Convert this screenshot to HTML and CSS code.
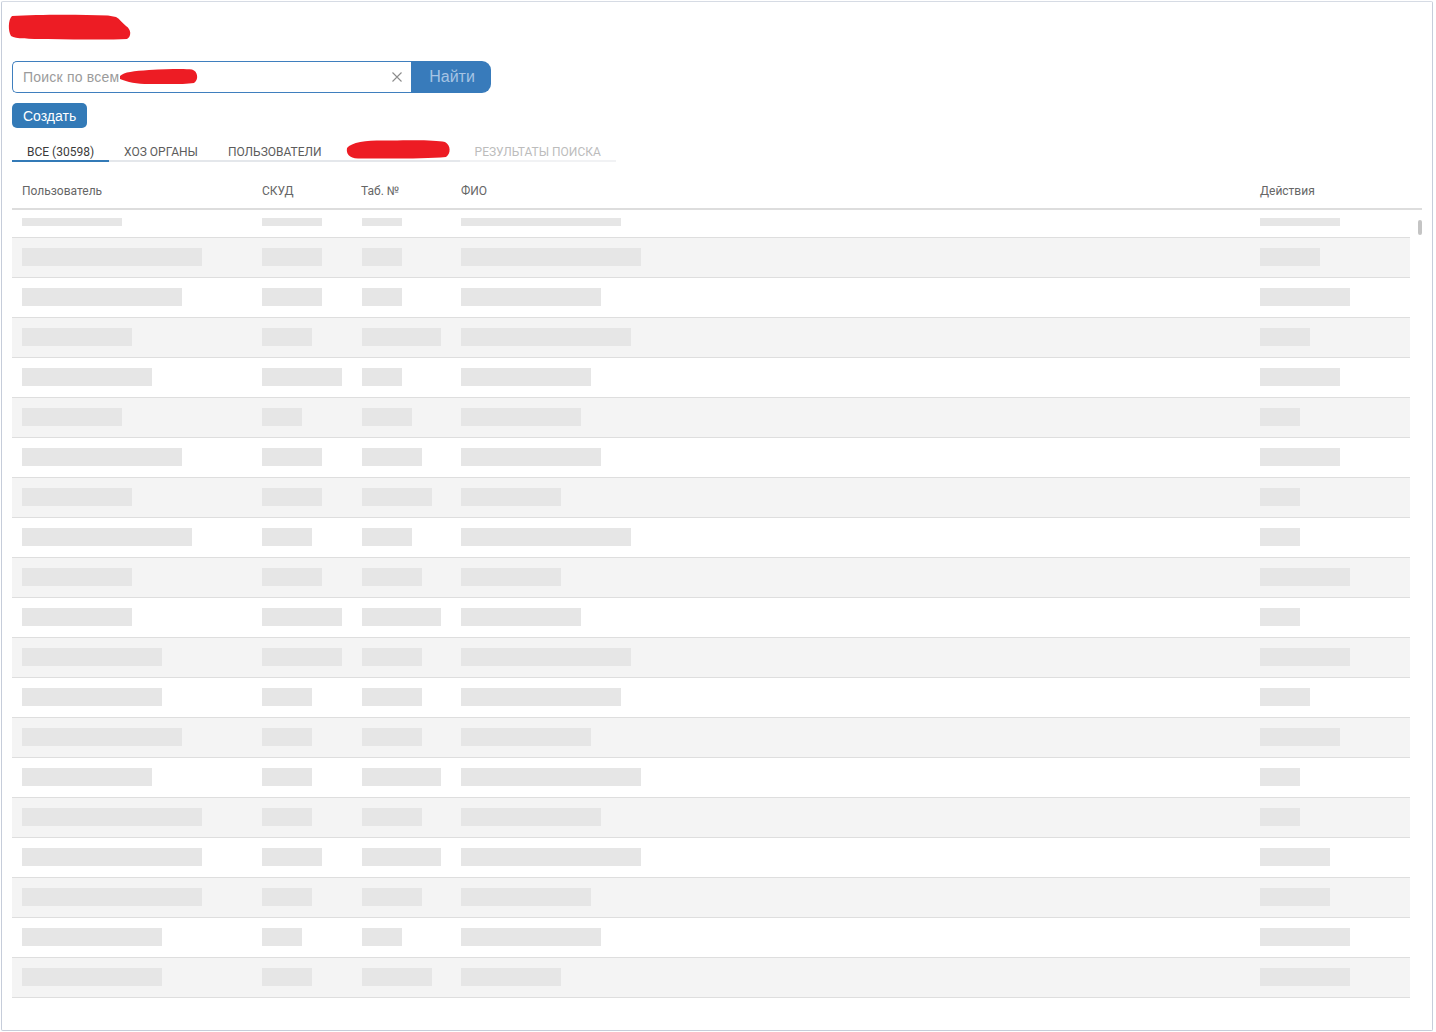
FILE: index.html
```html
<!DOCTYPE html>
<html lang="ru">
<head>
<meta charset="utf-8">
<title>Пользователи</title>
<link rel="stylesheet" href="styles.css">
</head>
<body>
<div class="frame">
  <div class="title">
    <svg class="redact-title" width="124" height="26" viewBox="0 0 124 26"><path d="M4 2 C30 0.5 70 0.5 100 1.5 L108 3 C112 5 114 9 118 12 C123 15 124 22 119 25 C100 26 70 25.5 40 25 C20 25 8 25 3 22 C0 17 0 6 4 2 Z" fill="#ed1c24"/></svg>
  </div>

  <div class="search-row">
    <div class="search-box">
      <span class="placeholder">Поиск по всем</span>
      <svg class="redact-input" width="80" height="17" viewBox="0 0 80 17"><path d="M1 8 C5 4 15 3 30 2 C50 1 65 0.5 73 1.5 C79 3 80 12 75 15 C65 16.5 45 16 30 16 C18 16 8 14 1 11 Z" fill="#ed1c24"/></svg>
      <span class="spacer"></span>
      <svg class="clear" width="10" height="10" viewBox="0 0 10 10"><path d="M0.5 0.5 L9.5 9.5 M9.5 0.5 L0.5 9.5" stroke="#8c8c8c" stroke-width="1.1" fill="none"/></svg>
    </div>
    <button class="find-btn" type="button">Найти</button>
  </div>

  <button class="create-btn" type="button">Создать</button>

  <div class="tabs">
    <div class="tab active">ВСЕ (30598)</div>
    <div class="tab">ХОЗ ОРГАНЫ</div>
    <div class="tab">ПОЛЬЗОВАТЕЛИ</div>
    <div class="tab"><span class="tab-redacted"><svg class="redact-tab" width="106" height="20" viewBox="0 0 106 20"><path d="M1 9 C6 2 25 1 45 1.5 C70 1 90 1 99 3 C105 6 105 15 100 18 C80 20 40 19.5 12 19.5 C3 19 0 15 1 9 Z" fill="#ed1c24"/></svg></span></div>
    <div class="tab disabled">РЕЗУЛЬТАТЫ ПОИСКА</div>
  </div>

  <div class="grid-head">
    <div class="th">Пользователь</div>
    <div class="th">СКУД</div>
    <div class="th">Таб. №</div>
    <div class="th">ФИО</div>
    <div class="th">Действия</div>
  </div>

  <div class="grid-body">
    <div class="rows">
      <div class="row partial">
        <div class="td"><span class="bar" style="width:100px"></span></div>
        <div class="td"><span class="bar" style="width:60px"></span></div>
        <div class="td"><span class="bar" style="width:40px"></span></div>
        <div class="td"><span class="bar" style="width:160px"></span></div>
        <div class="td"><span class="bar" style="width:80px"></span></div>
      </div>
      <div class="row odd">
        <div class="td"><span class="bar" style="width:180px"></span></div>
        <div class="td"><span class="bar" style="width:60px"></span></div>
        <div class="td"><span class="bar" style="width:40px"></span></div>
        <div class="td"><span class="bar" style="width:180px"></span></div>
        <div class="td"><span class="bar" style="width:60px"></span></div>
      </div>
      <div class="row">
        <div class="td"><span class="bar" style="width:160px"></span></div>
        <div class="td"><span class="bar" style="width:60px"></span></div>
        <div class="td"><span class="bar" style="width:40px"></span></div>
        <div class="td"><span class="bar" style="width:140px"></span></div>
        <div class="td"><span class="bar" style="width:90px"></span></div>
      </div>
      <div class="row odd">
        <div class="td"><span class="bar" style="width:110px"></span></div>
        <div class="td"><span class="bar" style="width:50px"></span></div>
        <div class="td"><span class="bar" style="width:79px"></span></div>
        <div class="td"><span class="bar" style="width:170px"></span></div>
        <div class="td"><span class="bar" style="width:50px"></span></div>
      </div>
      <div class="row">
        <div class="td"><span class="bar" style="width:130px"></span></div>
        <div class="td"><span class="bar" style="width:80px"></span></div>
        <div class="td"><span class="bar" style="width:40px"></span></div>
        <div class="td"><span class="bar" style="width:130px"></span></div>
        <div class="td"><span class="bar" style="width:80px"></span></div>
      </div>
      <div class="row odd">
        <div class="td"><span class="bar" style="width:100px"></span></div>
        <div class="td"><span class="bar" style="width:40px"></span></div>
        <div class="td"><span class="bar" style="width:50px"></span></div>
        <div class="td"><span class="bar" style="width:120px"></span></div>
        <div class="td"><span class="bar" style="width:40px"></span></div>
      </div>
      <div class="row">
        <div class="td"><span class="bar" style="width:160px"></span></div>
        <div class="td"><span class="bar" style="width:60px"></span></div>
        <div class="td"><span class="bar" style="width:60px"></span></div>
        <div class="td"><span class="bar" style="width:140px"></span></div>
        <div class="td"><span class="bar" style="width:80px"></span></div>
      </div>
      <div class="row odd">
        <div class="td"><span class="bar" style="width:110px"></span></div>
        <div class="td"><span class="bar" style="width:60px"></span></div>
        <div class="td"><span class="bar" style="width:70px"></span></div>
        <div class="td"><span class="bar" style="width:100px"></span></div>
        <div class="td"><span class="bar" style="width:40px"></span></div>
      </div>
      <div class="row">
        <div class="td"><span class="bar" style="width:170px"></span></div>
        <div class="td"><span class="bar" style="width:50px"></span></div>
        <div class="td"><span class="bar" style="width:50px"></span></div>
        <div class="td"><span class="bar" style="width:170px"></span></div>
        <div class="td"><span class="bar" style="width:40px"></span></div>
      </div>
      <div class="row odd">
        <div class="td"><span class="bar" style="width:110px"></span></div>
        <div class="td"><span class="bar" style="width:60px"></span></div>
        <div class="td"><span class="bar" style="width:60px"></span></div>
        <div class="td"><span class="bar" style="width:100px"></span></div>
        <div class="td"><span class="bar" style="width:90px"></span></div>
      </div>
      <div class="row">
        <div class="td"><span class="bar" style="width:110px"></span></div>
        <div class="td"><span class="bar" style="width:80px"></span></div>
        <div class="td"><span class="bar" style="width:79px"></span></div>
        <div class="td"><span class="bar" style="width:120px"></span></div>
        <div class="td"><span class="bar" style="width:40px"></span></div>
      </div>
      <div class="row odd">
        <div class="td"><span class="bar" style="width:140px"></span></div>
        <div class="td"><span class="bar" style="width:80px"></span></div>
        <div class="td"><span class="bar" style="width:60px"></span></div>
        <div class="td"><span class="bar" style="width:170px"></span></div>
        <div class="td"><span class="bar" style="width:90px"></span></div>
      </div>
      <div class="row">
        <div class="td"><span class="bar" style="width:140px"></span></div>
        <div class="td"><span class="bar" style="width:50px"></span></div>
        <div class="td"><span class="bar" style="width:60px"></span></div>
        <div class="td"><span class="bar" style="width:160px"></span></div>
        <div class="td"><span class="bar" style="width:50px"></span></div>
      </div>
      <div class="row odd">
        <div class="td"><span class="bar" style="width:160px"></span></div>
        <div class="td"><span class="bar" style="width:50px"></span></div>
        <div class="td"><span class="bar" style="width:60px"></span></div>
        <div class="td"><span class="bar" style="width:130px"></span></div>
        <div class="td"><span class="bar" style="width:80px"></span></div>
      </div>
      <div class="row">
        <div class="td"><span class="bar" style="width:130px"></span></div>
        <div class="td"><span class="bar" style="width:50px"></span></div>
        <div class="td"><span class="bar" style="width:79px"></span></div>
        <div class="td"><span class="bar" style="width:180px"></span></div>
        <div class="td"><span class="bar" style="width:40px"></span></div>
      </div>
      <div class="row odd">
        <div class="td"><span class="bar" style="width:180px"></span></div>
        <div class="td"><span class="bar" style="width:50px"></span></div>
        <div class="td"><span class="bar" style="width:60px"></span></div>
        <div class="td"><span class="bar" style="width:140px"></span></div>
        <div class="td"><span class="bar" style="width:40px"></span></div>
      </div>
      <div class="row">
        <div class="td"><span class="bar" style="width:180px"></span></div>
        <div class="td"><span class="bar" style="width:60px"></span></div>
        <div class="td"><span class="bar" style="width:79px"></span></div>
        <div class="td"><span class="bar" style="width:180px"></span></div>
        <div class="td"><span class="bar" style="width:70px"></span></div>
      </div>
      <div class="row odd">
        <div class="td"><span class="bar" style="width:180px"></span></div>
        <div class="td"><span class="bar" style="width:50px"></span></div>
        <div class="td"><span class="bar" style="width:60px"></span></div>
        <div class="td"><span class="bar" style="width:130px"></span></div>
        <div class="td"><span class="bar" style="width:70px"></span></div>
      </div>
      <div class="row">
        <div class="td"><span class="bar" style="width:140px"></span></div>
        <div class="td"><span class="bar" style="width:40px"></span></div>
        <div class="td"><span class="bar" style="width:40px"></span></div>
        <div class="td"><span class="bar" style="width:140px"></span></div>
        <div class="td"><span class="bar" style="width:90px"></span></div>
      </div>
      <div class="row odd">
        <div class="td"><span class="bar" style="width:140px"></span></div>
        <div class="td"><span class="bar" style="width:50px"></span></div>
        <div class="td"><span class="bar" style="width:70px"></span></div>
        <div class="td"><span class="bar" style="width:100px"></span></div>
        <div class="td"><span class="bar" style="width:90px"></span></div>
      </div>
    </div>
    <div class="scrollbar"><div class="thumb"></div></div>
  </div>
</div>
</body>
</html>
```

FILE: styles.css
```css
* { box-sizing: border-box; }

html, body {
  margin: 0;
  padding: 0;
  background: #ffffff;
}

body {
  font-family: Roboto, "Liberation Sans", sans-serif;
  color: #333;
}

.frame {
  margin: 1px 0 0 1px;
  width: 1432px;
  height: 1030px;
  border: 1px solid #c6cdda;
  border-top-color: #d6dbe4;
  border-radius: 2px;
  padding: 0 10px;
  background: #fff;
  overflow: hidden;
}

/* title (redacted) */
.title {
  height: 26px;
  margin: 12px 0 0 -4px;
}
.redact-title { display: block; }

/* search */
.search-row {
  display: flex;
  margin-top: 21px;
  height: 32px;
}

.search-box {
  width: 399px;
  height: 32px;
  display: flex;
  align-items: center;
  border: 1px solid #3f7fbe;
  border-right: none;
  border-radius: 5px 0 0 5px;
  padding: 0 9px 0 10px;
  font-family: "Liberation Sans", Arial, sans-serif;
  font-size: 14px;
}

.placeholder {
  color: #9b9b9b;
  white-space: nowrap;
  letter-spacing: 0.2px;
}

.redact-input {
  display: block;
  margin-left: 0;
  margin-top: -1px;
}

.spacer { flex: 1; }

.clear { display: block; }

.find-btn {
  width: 80px;
  height: 32px;
  border: none;
  margin: 0;
  padding: 0 0 1px 2px;
  background: #387bbb;
  color: #a6c4e4;
  font-family: "Liberation Sans", Arial, sans-serif;
  font-size: 16px;
  border-radius: 0 9px 9px 0;
}

.create-btn {
  display: block;
  margin-top: 10px;
  height: 25px;
  padding: 0 11px;
  border: none;
  border-radius: 5px;
  background: #337ab7;
  color: #fff;
  font-family: "Liberation Sans", Arial, sans-serif;
  font-size: 14px;
}

/* tabs */
.tabs {
  display: flex;
  margin-top: 11px;
}

.tab {
  padding: 6px 15px 1px;
  font-size: 12px;
  line-height: 14px;
  color: #5c5c5c;
  border-bottom: 2px solid #e4e7eb;
  white-space: nowrap;
}

.tab.active {
  color: #3a3a3a;
  border-bottom-color: #337ab7;
}

.tab.disabled {
  color: #bcbcbc;
  border-bottom-color: #f1f2f4;
}

.tab-redacted {
  display: inline-block;
  position: relative;
  width: 93px;
  height: 14px;
  vertical-align: top;
}

.redact-tab {
  position: absolute;
  left: -6px;
  top: -6px;
}

/* table */
.grid-head {
  display: grid;
  grid-template-columns: 240px 100px 99px 1fr 172px;
  height: 48px;
  padding-top: 22px;
  border-bottom: 2px solid #dddddd;
}

.th {
  padding-left: 10px;
  font-size: 12px;
  line-height: 14px;
  color: #666;
}

.th:nth-child(3) { padding-left: 9px; }

.grid-body {
  display: flex;
}

.rows { flex: 1; }

.row {
  display: grid;
  grid-template-columns: 240px 100px 99px 1fr 160px;
  height: 40px;
  padding-top: 10px;
  border-bottom: 1px solid #dedede;
  background: #fff;
}

.row.odd { background: #f4f4f4; }

.row.partial {
  height: 28px;
  padding-top: 8px;
}

.td {
  padding: 0 10px;
  overflow: hidden;
}

.bar {
  display: block;
  height: 18px;
  max-width: 100%;
  background: #e6e6e6;
}

.row.partial .bar { height: 8px; }

.scrollbar {
  width: 12px;
  padding: 10px 0 0 8px;
}

.thumb {
  width: 4px;
  height: 15px;
  border-radius: 2px;
  background: #c4c4c4;
}
```
